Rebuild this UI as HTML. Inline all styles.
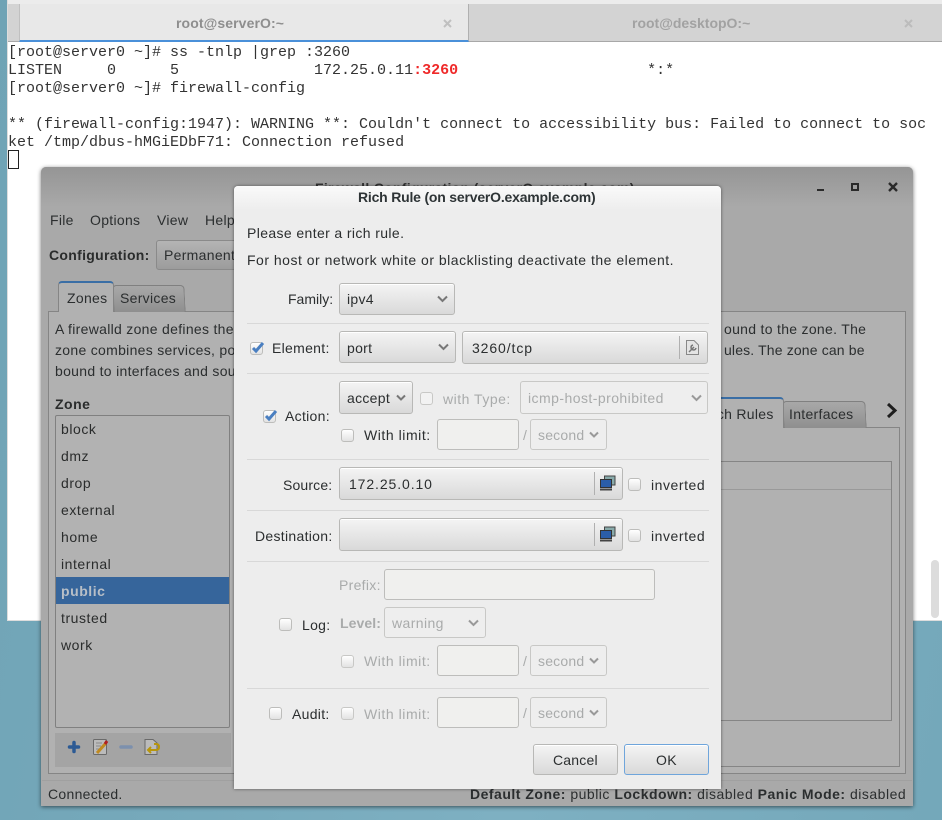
<!DOCTYPE html>
<html><head><meta charset="utf-8"><style>
html,body{margin:0;padding:0}
body{width:942px;height:820px;position:relative;overflow:hidden;background:linear-gradient(100deg,#6fa3b5,#7eb0c2 60%,#74a8ba);font:14px/20px "Liberation Sans",sans-serif;color:#2e3436}
div,span,svg{position:absolute;box-sizing:border-box}
.t{white-space:pre;letter-spacing:.3px}
.m{font:15px/18px "Liberation Mono",monospace;color:#333;white-space:pre;left:8px}
.w{color:#2b2e2f}
.d{color:#a9abab}
.b{font-weight:bold}
.sep{height:1px;background:#d8d8d8;left:247px;width:462px}
.sel{border:1px solid #b8b8b6;border-radius:3px;background:linear-gradient(#f4f4f4,#d9d9d9);box-shadow:inset 0 1px #fff}
.dis{background:#eeeeee;border:1px solid #c8c8c6;border-radius:3px;box-shadow:none}
.ent{border:1px solid #bdbdbb;border-radius:3px;background:#f0f0ee}
.cb{width:13px;height:13px;border:1px solid #bdbdbb;border-radius:3px;background:linear-gradient(#fff,#e2e2e2)}
.chev{width:13px;height:8px}
.lst{left:61px;color:#2a2c2c;letter-spacing:.55px}
</style></head><body>

<!-- terminal -->
<div style="left:7px;top:0;width:935px;height:621px;background:#fff;border-left:1px solid #ddd;border-bottom:1px solid #ddd"></div>
<div style="left:8px;top:0;width:934px;height:4px;background:#ececec"></div>
<div style="left:8px;top:4px;width:934px;height:38px;background:#d3d3d3;border-bottom:1px solid #a8a8a8"></div>
<div style="left:19px;top:4px;width:450px;height:38px;background:#e8e8e8;border-left:1px solid #c0c0c0;border-right:1px solid #b0b0b0;border-bottom:2px solid #4a90d9"></div>
<span class="t b" style="left:176px;top:13px;color:#8e8e8e;letter-spacing:.1px">root@serverO:~</span>
<span class="t b" style="left:632px;top:13px;color:#a2a2a2;letter-spacing:0">root@desktopO:~</span>
<svg style="left:442px;top:18px" width="11" height="11"><path d="M2 2L9 9M9 2L2 9" stroke="#c0c0c0" stroke-width="2"/></svg>
<svg style="left:903px;top:18px" width="11" height="11"><path d="M2 2L9 9M9 2L2 9" stroke="#bcbcbc" stroke-width="2"/></svg>

<span class="m" style="top:44px">[root@server0 ~]# ss -tnlp |grep :3260</span>
<span class="m" style="top:62px">LISTEN     0      5               172.25.0.11<b style="color:#ef2929">:3260</b>                     *:*</span>
<span class="m" style="top:80px">[root@server0 ~]# firewall-config</span>
<span class="m" style="top:116px">** (firewall-config:1947): WARNING **: Couldn't connect to accessibility bus: Failed to connect to soc</span>
<span class="m" style="top:134px">ket /tmp/dbus-hMGiEDbF71: Connection refused</span>
<div style="left:8px;top:150px;width:11px;height:19px;border:1px solid #222"></div>
<div style="left:931px;top:560px;width:8px;height:58px;background:#dcdcdc;border-radius:4px"></div>

<!-- firewall window -->
<div style="left:41px;top:167px;width:872px;height:639px;background:#a9a9a9;border-radius:5px 5px 0 0;box-shadow:0 1px 4px rgba(0,0,0,.55)"></div>
<div style="left:41px;top:167px;width:872px;height:40px;background:linear-gradient(#959595,#a9a9a9);border-radius:5px 5px 0 0"></div>
<span class="t b" style="left:315px;top:178px;color:#333">Firewall Configuration (serverO.example.com)</span>
<div style="left:817px;top:189px;width:7px;height:2px;background:#2a2a2a"></div>
<div style="left:851px;top:183px;width:8px;height:8px;border:2px solid #2a2a2a"></div>
<svg style="left:887px;top:181px" width="12" height="12"><path d="M2 2L10 10M10 2L2 10" stroke="#2a2a2a" stroke-width="2.4"/></svg>

<span class="t w" style="left:50px;top:210px">File</span>
<span class="t w" style="left:90px;top:210px">Options</span>
<span class="t w" style="left:157px;top:210px">View</span>
<span class="t w" style="left:205px;top:210px">Help</span>
<span class="t b" style="left:49px;top:245px;color:#2a2c2c">Configuration:</span>
<div style="left:156px;top:240px;width:90px;height:30px;border:1px solid #8a8a8a;border-radius:3px;background:linear-gradient(#b4b4b4,#9c9c9c)"></div>
<span class="t w" style="left:164px;top:245px">Permanent</span>

<!-- main notebook -->
<div style="left:48px;top:311px;width:858px;height:463px;border:1px solid #858585;background:#b1b1b1"></div>
<div style="left:113px;top:285px;width:72px;height:27px;background:linear-gradient(#a8a8a8,#8f8f8f);border:1px solid #808080;border-bottom:0;border-radius:4px 4px 0 0;transform:skewX(3deg)"></div>
<div style="left:58px;top:281px;width:56px;height:31px;background:#b1b1b1;border:1px solid #858585;border-top:2px solid #3a6ea5;border-bottom:0;border-radius:4px 4px 0 0"></div>
<span class="t w" style="left:67px;top:288px">Zones</span>
<span class="t w" style="left:120px;top:288px">Services</span>
<span class="t w" style="left:55px;top:319px">A firewalld zone defines the</span>
<span class="t w" style="left:55px;top:340px">zone combines services, po</span>
<span class="t w" style="left:55px;top:361px">bound to interfaces and sou</span>
<span class="t w" style="left:724px;top:319px">ound to the zone. The</span>
<span class="t w" style="left:724px;top:340px;letter-spacing:.15px">ules. The zone can be</span>
<span class="t b" style="left:55px;top:394px;color:#2a2c2c;letter-spacing:.5px">Zone</span>

<!-- zone list -->
<div style="left:55px;top:415px;width:175px;height:313px;border:1px solid #808080;border-radius:2px;background:#b2b2b2"></div>
<span class="t lst" style="top:419px">block</span>
<span class="t lst" style="top:446px">dmz</span>
<span class="t lst" style="top:473px">drop</span>
<span class="t lst" style="top:500px">external</span>
<span class="t lst" style="top:527px">home</span>
<span class="t lst" style="top:554px">internal</span>
<div style="left:56px;top:577px;width:173px;height:27px;background:#36659b"></div>
<span class="t lst b" style="top:581px;color:#b8bfc7">public</span>
<span class="t lst" style="top:608px">trusted</span>
<span class="t lst" style="top:635px">work</span>
<div style="left:55px;top:733px;width:176px;height:34px;background:#a4a4a4"></div>
<svg style="left:66px;top:739px" width="16" height="16"><path d="M8 3.5V12.5M3.5 8H12.5" stroke="#2c5a94" stroke-width="3.5" stroke-linecap="round"/></svg>
<svg style="left:92px;top:738px" width="18" height="18"><rect x="1.5" y="1.5" width="13" height="15" rx="1" fill="#bbb" stroke="#6a6a6a"/><path d="M4 5H10M4 8H9M4 11H7" stroke="#888"/><path d="M5 15L14 5" stroke="#c08a20" stroke-width="3"/><path d="M13 6L15 3" stroke="#b02020" stroke-width="3"/></svg>
<svg style="left:119px;top:743px" width="14" height="8"><path d="M2 4H12" stroke="#7c90ad" stroke-width="3.5" stroke-linecap="round"/></svg>
<svg style="left:143px;top:738px" width="19" height="18"><path d="M2 1.5H10L14 5V16.5H2Z" fill="#bbb" stroke="#6a6a6a"/><path d="M6 12H13Q16 12 16 9T13 6H11M8 9L5 12L8 15" fill="none" stroke="#b8960c" stroke-width="2"/></svg>

<!-- inner notebook -->
<div style="left:240px;top:427px;width:660px;height:340px;border:1px solid #858585"></div>
<div style="left:783px;top:401px;width:83px;height:27px;background:linear-gradient(#a8a8a8,#8f8f8f);border:1px solid #808080;border-bottom:0;border-radius:4px 4px 0 0;transform:skewX(3deg)"></div>
<div style="left:700px;top:397px;width:84px;height:31px;background:#b1b1b1;border-top:2px solid #3a6ea5;border-right:1px solid #858585;border-radius:0 4px 0 0"></div>
<span class="t w" style="left:703px;top:404px">Rich Rules</span>
<span class="t w" style="left:789px;top:404px">Interfaces</span>
<svg style="left:885px;top:402px" width="14" height="17"><path d="M3 2L10 8.5L3 15" fill="none" stroke="#1e1e1e" stroke-width="3"/></svg>
<div style="left:240px;top:461px;width:652px;height:260px;border:1px solid #858585"></div>
<div style="left:240px;top:489px;width:651px;height:1px;background:#999"></div>

<!-- statusbar -->
<div style="left:42px;top:780px;width:870px;height:1px;background:#a0a0a0"></div>
<span class="t w" style="left:48px;top:784px;letter-spacing:.3px">Connected.</span>
<span class="t w" style="left:470px;top:784px;letter-spacing:.5px"><b>Default Zone:</b> public <b>Lockdown:</b> disabled <b>Panic Mode:</b> disabled</span>

<!-- dialog -->
<div style="left:234px;top:186px;width:487px;height:603px;background:#ededed;border-radius:4px 4px 0 0;box-shadow:0 0 3px rgba(0,0,0,.5)"></div>
<div style="left:234px;top:186px;width:487px;height:24px;background:linear-gradient(#fafafa,#ededed);border-radius:4px 4px 0 0"></div>
<span class="t b" style="left:358px;top:187px;color:#2e3436;letter-spacing:-.2px">Rich Rule (on serverO.example.com)</span>
<span class="t w" style="left:247px;top:223px;letter-spacing:.38px">Please enter a rich rule.</span>
<span class="t w" style="left:247px;top:250px;letter-spacing:.5px">For host or network white or blacklisting deactivate the element.</span>

<span class="t w" style="left:288px;top:289px;letter-spacing:0">Family:</span>
<div class="sel" style="left:339px;top:283px;width:116px;height:32px"></div>
<span class="t w" style="left:347px;top:289px">ipv4</span>
<svg class="chev" style="left:436px;top:295px"><path d="M2 1.5L6.5 6L11 1.5" fill="none" stroke="#777" stroke-width="2"/></svg>
<div class="sep" style="top:323px"></div>

<div class="cb" style="left:250px;top:342px"></div>
<svg style="left:250px;top:340px" width="15" height="14"><path d="M3 8L6 11L13 3" fill="none" stroke="#4a7fc1" stroke-width="3"/></svg>
<span class="t w" style="left:272px;top:338px">Element:</span>
<div class="sel" style="left:339px;top:331px;width:117px;height:32px"></div>
<span class="t w" style="left:347px;top:338px">port</span>
<svg class="chev" style="left:437px;top:343px"><path d="M2 1.5L6.5 6L11 1.5" fill="none" stroke="#777" stroke-width="2"/></svg>
<div class="sel" style="left:462px;top:331px;width:246px;height:33px"></div>
<span class="t w" style="left:472px;top:338px;letter-spacing:.9px">3260/tcp</span>
<div style="left:679px;top:336px;width:1px;height:23px;background:#b0b0b0"></div>
<svg style="left:685px;top:339px" width="15" height="17"><path d="M1.5 1.5H9L13.5 6V15.5H1.5Z" fill="#e4e4e4" stroke="#888"/><path d="M4 13L9 8M8 6A2.5 2.5 0 1 0 11 9" fill="none" stroke="#777" stroke-width="1.5"/></svg>
<div class="sep" style="top:373px"></div>

<div class="cb" style="left:263px;top:410px"></div>
<svg style="left:263px;top:408px" width="15" height="14"><path d="M3 8L6 11L13 3" fill="none" stroke="#4a7fc1" stroke-width="3"/></svg>
<span class="t w" style="left:285px;top:406px">Action:</span>
<div class="sel" style="left:339px;top:381px;width:74px;height:33px"></div>
<span class="t w" style="left:347px;top:388px">accept</span>
<svg class="chev" style="left:395px;top:394px"><path d="M2 1.5L6 5.5L10 1.5" fill="none" stroke="#777" stroke-width="2"/></svg>
<div class="cb" style="left:420px;top:392px;border-color:#c8c8c6;background:#f2f2f2"></div>
<span class="t d" style="left:443px;top:389px;letter-spacing:.5px">with Type:</span>
<div class="sel dis" style="left:520px;top:381px;width:188px;height:33px"></div>
<span class="t d" style="left:528px;top:388px;letter-spacing:.45px">icmp-host-prohibited</span>
<svg class="chev" style="left:690px;top:394px"><path d="M2 1.5L6.5 6L11 1.5" fill="none" stroke="#999" stroke-width="2"/></svg>
<div class="cb" style="left:341px;top:429px"></div>
<span class="t w" style="left:364px;top:425px;letter-spacing:.55px">With limit:</span>
<div class="ent dis" style="left:437px;top:419px;width:82px;height:31px"></div>
<span class="t d" style="left:523px;top:425px">/</span>
<div class="sel dis" style="left:530px;top:419px;width:77px;height:31px"></div>
<span class="t d" style="left:538px;top:425px;letter-spacing:.2px">second</span>
<svg class="chev" style="left:588px;top:431px"><path d="M2 1.5L6 5.5L10 1.5" fill="none" stroke="#999" stroke-width="2"/></svg>
<div class="sep" style="top:459px"></div>

<span class="t w" style="left:283px;top:475px;letter-spacing:.15px">Source:</span>
<div class="sel" style="left:339px;top:467px;width:284px;height:33px"></div>
<span class="t w" style="left:349px;top:474px;letter-spacing:.9px">172.25.0.10</span>
<div style="left:594px;top:472px;width:1px;height:23px;background:#b0b0b0"></div>
<svg style="left:599px;top:475px" width="17" height="17"><rect x="5.5" y="1" width="10.5" height="9" fill="#8aa" stroke="#444"/><rect x="1.5" y="4.5" width="11" height="8" fill="#2b5da8" stroke="#333"/><path d="M1 14.5H13" stroke="#444" stroke-width="2"/></svg>
<div class="cb" style="left:628px;top:478px"></div>
<span class="t w" style="left:651px;top:475px;letter-spacing:.55px">inverted</span>
<div class="sep" style="top:510px"></div>

<span class="t w" style="left:255px;top:526px">Destination:</span>
<div class="sel" style="left:339px;top:518px;width:284px;height:33px"></div>
<div style="left:594px;top:523px;width:1px;height:23px;background:#b0b0b0"></div>
<svg style="left:599px;top:526px" width="17" height="17"><rect x="5.5" y="1" width="10.5" height="9" fill="#8aa" stroke="#444"/><rect x="1.5" y="4.5" width="11" height="8" fill="#2b5da8" stroke="#333"/><path d="M1 14.5H13" stroke="#444" stroke-width="2"/></svg>
<div class="cb" style="left:628px;top:529px"></div>
<span class="t w" style="left:651px;top:526px;letter-spacing:.55px">inverted</span>
<div class="sep" style="top:561px"></div>

<span class="t d" style="left:339px;top:575px">Prefix:</span>
<div class="ent dis" style="left:384px;top:569px;width:271px;height:31px"></div>
<div class="cb" style="left:279px;top:618px"></div>
<span class="t w" style="left:302px;top:615px">Log:</span>
<span class="t d b" style="left:340px;top:613px;letter-spacing:.1px">Level:</span>
<div class="sel dis" style="left:384px;top:607px;width:102px;height:31px"></div>
<span class="t d" style="left:392px;top:613px;letter-spacing:.4px">warning</span>
<svg class="chev" style="left:467px;top:619px"><path d="M2 1.5L6.5 6L11 1.5" fill="none" stroke="#999" stroke-width="2"/></svg>
<div class="cb" style="left:341px;top:655px;border-color:#c8c8c6"></div>
<span class="t d" style="left:364px;top:651px;letter-spacing:.55px">With limit:</span>
<div class="ent dis" style="left:437px;top:645px;width:82px;height:31px"></div>
<span class="t d" style="left:523px;top:651px">/</span>
<div class="sel dis" style="left:530px;top:645px;width:77px;height:31px"></div>
<span class="t d" style="left:538px;top:651px;letter-spacing:.2px">second</span>
<svg class="chev" style="left:588px;top:657px"><path d="M2 1.5L6 5.5L10 1.5" fill="none" stroke="#999" stroke-width="2"/></svg>
<div class="sep" style="top:688px"></div>

<div class="cb" style="left:269px;top:707px"></div>
<span class="t w" style="left:292px;top:704px">Audit:</span>
<div class="cb" style="left:341px;top:707px;border-color:#c8c8c6"></div>
<span class="t d" style="left:364px;top:704px;letter-spacing:.55px">With limit:</span>
<div class="ent dis" style="left:437px;top:697px;width:82px;height:31px"></div>
<span class="t d" style="left:523px;top:703px">/</span>
<div class="sel dis" style="left:530px;top:697px;width:77px;height:31px"></div>
<span class="t d" style="left:538px;top:703px;letter-spacing:.2px">second</span>
<svg class="chev" style="left:588px;top:709px"><path d="M2 1.5L6 5.5L10 1.5" fill="none" stroke="#999" stroke-width="2"/></svg>

<div class="sel" style="left:533px;top:744px;width:85px;height:31px"></div>
<span class="t w" style="left:553px;top:750px;letter-spacing:.2px">Cancel</span>
<div class="sel" style="left:624px;top:744px;width:85px;height:31px;border-color:#6fa5db"></div>
<span class="t w" style="left:656px;top:750px">OK</span>
</body></html>
